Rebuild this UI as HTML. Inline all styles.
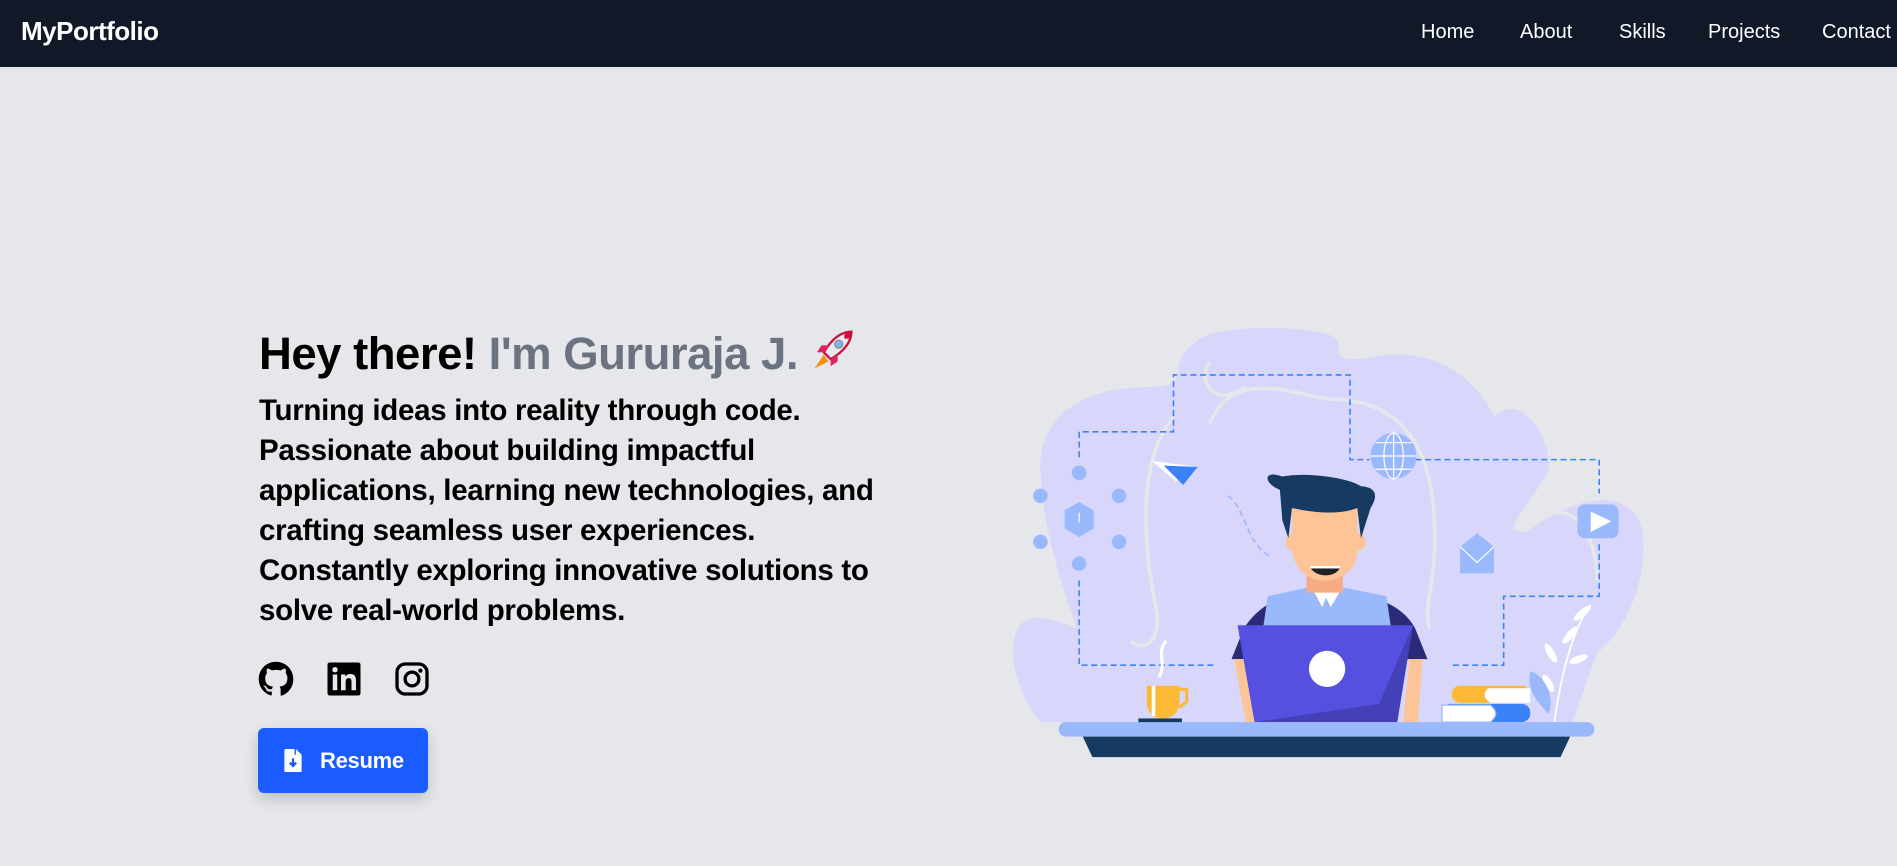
<!DOCTYPE html>
<html><head><meta charset="utf-8"><style>
*{margin:0;padding:0;box-sizing:border-box}
html,body{width:1897px;height:866px;overflow:hidden;background:#e5e7eb;font-family:"Liberation Sans",sans-serif}
nav{position:absolute;left:0;top:0;width:1897px;height:67px;background:#111827;color:#fff}
.logo{position:absolute;left:21px;top:16px;font-size:26px;font-weight:bold;letter-spacing:-0.5px}
.links a{position:absolute;top:21px;font-size:20px;color:#fff;text-decoration:none}
h1{position:absolute;left:259px;top:327px;font-size:45.5px;font-weight:bold;color:#000;white-space:nowrap;letter-spacing:-0.5px}
h1 span{color:#6b7280}
p{position:absolute;left:259px;top:391px;font-size:29.5px;line-height:40px;font-weight:bold;color:#000;white-space:nowrap;letter-spacing:-0.3px}
.ic{position:absolute;top:661px;width:36px;height:36px}
.btn{position:absolute;left:258px;top:728px;width:170px;height:65px;background:#1a5cff;border-radius:6px;box-shadow:0 6px 14px rgba(0,0,0,.18);color:#fff;font-weight:bold;font-size:22px}
.btn span{position:absolute;left:62px;top:20px;letter-spacing:-0.3px}
svg.ill{position:absolute;left:0;top:0}
</style></head><body>
<nav><div class="logo">MyPortfolio</div>
<div class="links"><a style="left:1421px">Home</a><a style="left:1520px">About</a><a style="left:1619px">Skills</a><a style="left:1708px">Projects</a><a style="left:1822px">Contact</a></div></nav>

<h1>Hey there! <span>I'm Gururaja J.</span> <svg width="46" height="46" viewBox="0 0 40 40" style="vertical-align:-4px"><path d="M36 4 C26 4 18 12 12 22 L18 28 C28 22 36 14 36 4Z" fill="#e8e8ee" stroke="#c8103d" stroke-width="2"/><path d="M36 4 C31 4 29 6 30 10 C34 11 36 9 36 4Z" fill="#c8103d"/><circle cx="25" cy="15" r="3.5" fill="#7ab8e8" stroke="#888" stroke-width="1"/><path d="M12 22 L6 22 L10 16 L17 16Z M18 28 L18 34 L24 30 L24 23Z" fill="#e0245e"/><path d="M12 24 L4 36 L16 30Z" fill="#f4900c"/></svg></h1>
<p>Turning ideas into reality through code.<br>Passionate about building impactful<br>applications, learning new technologies, and<br>crafting seamless user experiences.<br>Constantly exploring innovative solutions to<br>solve real-world problems.</p>

<svg class="ic" style="left:258px" viewBox="0 0 24 24"><path fill="#000" d="M12 .5C5.6.5.5 5.6.5 12c0 5.1 3.3 9.4 7.9 10.9.6.1.8-.2.8-.6v-2c-3.2.7-3.9-1.5-3.9-1.5-.5-1.3-1.300-1.7-1.3-1.7-1-.7.1-.7.1-.7 1.2.1 1.8 1.2 1.8 1.2 1 1.8 2.8 1.3 3.5 1 .1-.8.4-1.3.7-1.6-2.6-.3-5.3-1.3-5.3-5.7 0-1.3.5-2.3 1.2-3.1-.1-.3-.5-1.5.1-3.1 0 0 1-.3 3.2 1.2a11 11 0 0 1 5.8 0c2.2-1.5 3.2-1.2 3.2-1.2.6 1.6.2 2.8.1 3.1.8.8 1.2 1.9 1.2 3.1 0 4.4-2.7 5.4-5.3 5.7.4.4.8 1.1.8 2.2v3.3c0 .3.2.7.8.6A11.5 11.5 0 0 0 23.5 12C23.5 5.6 18.4.5 12 .5Z"/></svg>
<svg class="ic" style="left:326px" viewBox="0 0 24 24"><rect x="1" y="1" width="22" height="22" rx="1.5" fill="#000"/><rect x="4.5" y="9" width="3" height="10.5" fill="#e5e7eb"/><circle cx="6" cy="5.8" r="1.8" fill="#e5e7eb"/><path d="M10 9h2.9v1.5c.5-.9 1.6-1.8 3.3-1.8 3.3 0 3.8 2.1 3.8 4.9v5.9h-3v-5.2c0-1.3 0-2.9-1.8-2.9s-2.1 1.4-2.1 2.8v5.3H10Z" fill="#e5e7eb"/></svg>
<svg class="ic" style="left:394px" viewBox="0 0 24 24"><rect x="2" y="2" width="20" height="20" rx="5.5" fill="none" stroke="#000" stroke-width="2.2"/><circle cx="12" cy="12" r="4.6" fill="none" stroke="#000" stroke-width="2.2"/><circle cx="17.6" cy="6.4" r="1.4" fill="#000"/></svg>

<div class="btn"><svg style="position:absolute;left:26px;top:21px" width="18" height="23" viewBox="0 0 12 16"><path d="M0 1a1 1 0 0 1 1-1h6v4h5v11a1 1 0 0 1-1 1H1a1 1 0 0 1-1-1Z M8 0l4 4H8Z" fill="#fff"/><path d="M6 6.5v5 M3.8 9.5 6 11.8 8.2 9.5" stroke="#1a5cff" stroke-width="1.6" fill="none"/></svg><span>Resume</span></div>

<svg class="ill" width="1897" height="866" viewBox="0 0 1568 716">
<path fill="#d8d6fb" d="M990 282 C1000 268 1090 268 1105 280 C1110 292 1100 300 1130 296 C1190 282 1225 320 1235 345 C1260 320 1285 370 1280 390 C1255 430 1240 440 1262 440 C1300 410 1350 400 1358 440 C1362 480 1345 520 1320 540 L1300 597 L860 597 C838 570 830 530 845 515 C855 505 880 515 890 520 C880 490 862 440 860 390 C858 340 900 320 950 320 C990 320 960 300 990 282Z"/>
<path d="M1000 350 C1020 300 1080 330 1100 330 C1150 330 1180 360 1185 420 C1190 480 1175 500 1182 520" stroke="#e5e7eb" stroke-width="3" fill="none"/>
<path d="M970 345 C940 380 945 450 955 500 C962 530 945 540 935 530" stroke="#e5e7eb" stroke-width="3" fill="none"/>
<path d="M1030 320 C1000 340 990 310 1000 300 M1270 430 C1300 410 1320 440 1320 480" stroke="#e5e7eb" stroke-width="3" fill="none"/>
<g stroke="#3b82f6" stroke-width="1.3" stroke-dasharray="5 3" fill="none">
<path d="M892 378 V357 H970 V310 H1116 V380 H1132"/>
<path d="M1170 380 H1322 V408"/>
<path d="M1322 450 V493 H1243 V550 H1200"/>
<path d="M892 480 V550 H1005"/>
<path d="M1015 410 C1030 420 1030 450 1050 460" stroke="#9ab8fc"/>
</g>
<path d="M952 381 L990 386 L972 398Z" fill="#fff"/><path d="M962 385 L990 386 L978 401Z" fill="#3b82f6"/>
<g fill="#9ab8fc"><path d="M892 415 L904 422 V437 L892 444 L880 437 V422Z"/>
<circle cx="892" cy="391" r="6"/><circle cx="860" cy="410" r="6"/><circle cx="925" cy="410" r="6"/><circle cx="860" cy="448" r="6"/><circle cx="925" cy="448" r="6"/><circle cx="892" cy="466" r="6"/>
<circle cx="1152" cy="377" r="19"/><rect x="1304" y="417" width="34" height="28" rx="6"/><rect x="1207" y="452" width="28" height="22"/><path d="M1207 452 L1221 441 L1235 452Z"/></g>
<path d="M1315 423 L1332 431 L1315 440Z" fill="#fff"/><path d="M1207 452 L1221 465 L1235 452" stroke="#fff" fill="none"/>
<g stroke="#fff" stroke-width="1" fill="none"><ellipse cx="1152" cy="377" rx="8" ry="19"/><path d="M1133 377 H1171 M1137 366 H1167 M1137 388 H1167 M1152 358 V396"/><path d="M892 424 v8" /></g>
<g fill="#fff"><path d="M1285 597 C1290 560 1300 520 1315 500" stroke="#fff" stroke-width="1.5" fill="none"/><ellipse cx="1298" cy="525" rx="9" ry="3" transform="rotate(-50 1298 525)"/><ellipse cx="1308" cy="507" rx="9" ry="3" transform="rotate(-40 1308 507)"/><ellipse cx="1282" cy="540" rx="9" ry="3" transform="rotate(60 1282 540)"/><ellipse cx="1305" cy="545" rx="8" ry="3" transform="rotate(-20 1305 545)"/><ellipse cx="1280" cy="565" rx="8" ry="3" transform="rotate(60 1280 565)"/></g>
<path d="M1265 555 C1280 560 1285 580 1280 590 C1270 580 1262 570 1265 555Z" fill="#9ab8fc"/>
<path d="M1028 520 C1040 500 1060 492 1080 488 H1110 C1135 492 1160 500 1170 520 L1180 545 L1018 545Z" fill="#2a2a78"/>
<path d="M1048 493 L1080 486 H1112 L1146 493 L1150 520 H1044Z" fill="#9ab8fc"/>
<path d="M1084 485 L1093 502 L1096 494 L1100 502 L1110 485Z" fill="#fff"/>
<path d="M1020 545 L1030 597 H1042 L1030 545Z M1165 545 L1160 597 H1172 L1176 545Z" fill="#fdc597"/>
<rect x="1080" y="470" width="30" height="20" fill="#f7ab84"/>
<ellipse cx="1068" cy="448" rx="5" ry="7" fill="#fdc597"/><ellipse cx="1124" cy="448" rx="5" ry="7" fill="#fdc597"/>
<path d="M1068 420 H1122 V455 C1122 470 1110 480 1095 480 C1080 480 1070 470 1068 455Z" fill="#fdc597"/>
<path d="M1083 469 H1108 C1104 478 1088 478 1083 469Z" fill="#222"/><rect x="1083" y="468" width="25" height="2" fill="#fff"/>
<path d="M1060 430 L1058 405 C1045 400 1043 388 1060 394 C1080 390 1115 395 1125 402 C1140 403 1138 412 1133 420 L1125 445 L1122 420 C1110 425 1090 425 1068 420 L1065 445Z" fill="#173a63"/>
<path d="M1023 517 H1168 L1155 597 H1037Z" fill="#5550e0"/><path d="M1168 517 L1140 582 L1037 597 H1155Z" fill="#4340b8"/>
<circle cx="1097" cy="553" r="15" fill="#fff"/>
<path d="M948 567 H975 V580 C975 590 968 594 961 594 C954 594 948 590 948 580Z" fill="#fbb934"/><path d="M975 570 H981 V580 L975 585" stroke="#fbb934" stroke-width="2.5" fill="none"/><rect x="952" y="567" width="3" height="25" fill="#fff"/><rect x="941" y="594" width="36" height="4" fill="#173a63"/>
<path d="M964 530 C955 540 965 548 958 560" stroke="#fff" stroke-width="2.5" fill="none"/>
<rect x="1200" y="567" width="65" height="14" rx="7" fill="#fbb934"/><path d="M1230 569 H1265 V581 H1232 C1226 577 1226 573 1230 569Z" fill="#fff"/>
<rect x="1192" y="582" width="73" height="15" rx="7" fill="#3b82f6"/><path d="M1192 583 H1232 C1238 588 1238 592 1232 597 H1192Z" fill="#fff" stroke="#9ab8fc"/>
<rect x="875" y="597" width="443" height="12" rx="6" fill="#9ab8fc"/>
<path d="M895 609 H1298 L1290 626 H903Z" fill="#173a63"/>
</svg>
</body></html>
